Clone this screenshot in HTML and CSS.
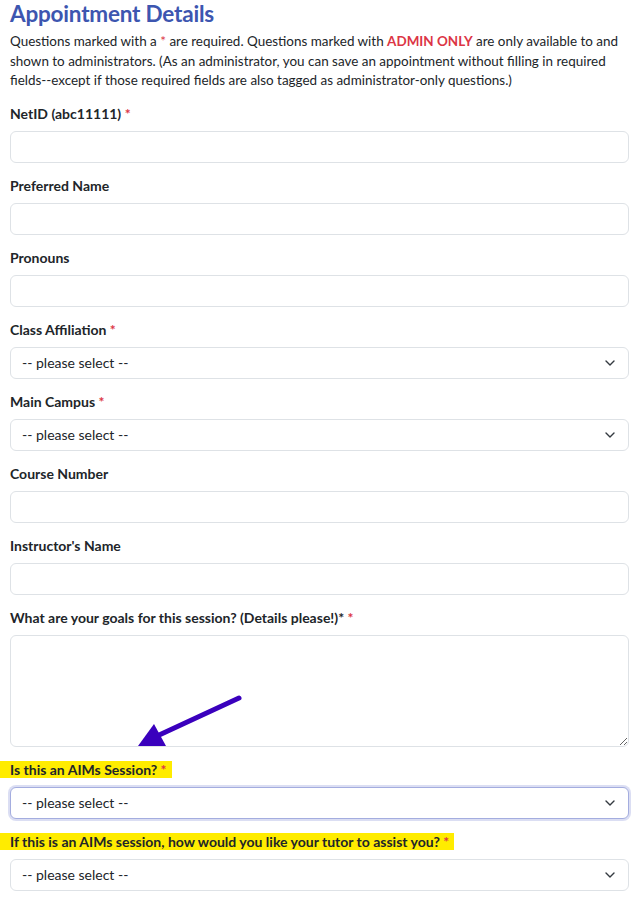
FILE: index.html
```html
<!DOCTYPE html>
<html lang="en">
<head>
<meta charset="utf-8">
<title>Appointment Details</title>
<link rel="stylesheet" href="styles.css">
</head>
<body>
<div class="page">
  <h2 class="title">Appointment Details</h2>
  <p class="intro">Questions marked with a <span class="req">*</span> are required. Questions marked with <strong class="admin">ADMIN ONLY</strong> are only available to and shown to administrators. (As an administrator, you can save an appointment without filling in required fields--except if those required fields are also tagged as administrator-only questions.)</p>

  <div class="field">
    <label class="field-label">NetID (abc11111) <span class="req">*</span></label>
    <input class="control" type="text">
  </div>
  <div class="field">
    <label class="field-label">Preferred Name</label>
    <input class="control" type="text">
  </div>
  <div class="field">
    <label class="field-label">Pronouns</label>
    <input class="control" type="text">
  </div>
  <div class="field">
    <label class="field-label">Class Affiliation <span class="req">*</span></label>
    <select class="control select"><option>-- please select --</option></select>
  </div>
  <div class="field">
    <label class="field-label">Main Campus <span class="req">*</span></label>
    <select class="control select"><option>-- please select --</option></select>
  </div>
  <div class="field">
    <label class="field-label">Course Number</label>
    <input class="control" type="text">
  </div>
  <div class="field">
    <label class="field-label">Instructor's Name</label>
    <input class="control" type="text">
  </div>
  <div class="field">
    <label class="field-label">What are your goals for this session? (Details please!)* <span class="req">*</span></label>
    <textarea class="control textarea"></textarea>
  </div>
  <div class="field">
    <label class="field-label"><span class="hl hl-1">Is this an AIMs Session? <span class="req">*</span></span></label>
    <select class="control select focus"><option>-- please select --</option></select>
  </div>
  <div class="field">
    <label class="field-label"><span class="hl hl-2">If this is an AIMs session, how would you like your tutor to assist you? <span class="req">*</span></span></label>
    <select class="control select"><option>-- please select --</option></select>
  </div>

  <svg class="arrow" width="130" height="70" viewBox="130 690 130 70" xmlns="http://www.w3.org/2000/svg">
    <line x1="239" y1="698" x2="157" y2="736" stroke="#3a00bd" stroke-width="5" stroke-linecap="round"/>
    <polygon points="138,746 154,724 166,746" fill="#3a00bd"/>
  </svg>
</div>
</body>
</html>
```

FILE: styles.css
```css
* { box-sizing: border-box; }

html, body {
  margin: 0;
  padding: 0;
  background: #ffffff;
}

body {
  font-family: Lato, "Noto Sans", sans-serif;
  font-size: 14px;
  color: #212529;
}

.page {
  position: relative;
  padding: 0 10px;
}

.title {
  margin: 0;
  padding-top: 1px;
  font-size: 22.5px;
  font-weight: 700;
  line-height: 26px;
  letter-spacing: -0.2px;
  color: #3d56b0;
}

.intro {
  margin: 5px 0 13px;
  line-height: 19.6px;
  font-size: 13.45px;
}

.admin {
  color: #dc3545;
  font-weight: 700;
}

.req {
  color: #dc3545;
}

.field {
  margin-bottom: 13px;
}

.field-label {
  display: block;
  font-weight: 700;
  font-size: 14px;
  line-height: 20px;
  margin-bottom: 7px;
}

.control {
  display: block;
  width: 100%;
  height: 32px;
  margin: 0;
  padding: 4px 11px;
  font-family: inherit;
  font-size: 14px;
  color: #212529;
  background-color: #fff;
  border: 1px solid #dee2e6;
  border-radius: 6px;
  outline: none;
}

.select {
  appearance: none;
  -webkit-appearance: none;
  background-image: url("data:image/svg+xml,%3Csvg xmlns='http://www.w3.org/2000/svg' viewBox='0 0 10 6'%3E%3Cpath d='M1 1l4 4 4-4' fill='none' stroke='%23343a40' stroke-width='1.4' stroke-linecap='round' stroke-linejoin='round'/%3E%3C/svg%3E");
  background-repeat: no-repeat;
  background-position: right 13px center;
  background-size: 10px 6px;
}

.select.focus {
  border-color: #a4addf;
  box-shadow: 0 0 0 2px rgba(90, 105, 200, 0.22);
}

.textarea {
  height: 112px;
  resize: vertical;
}

.hl {
  background: #ffec00;
  margin-left: -10px;
  padding: 0 5px 0 10px;
}

.arrow {
  position: absolute;
  left: 130px;
  top: 690px;
  pointer-events: none;
}
```
